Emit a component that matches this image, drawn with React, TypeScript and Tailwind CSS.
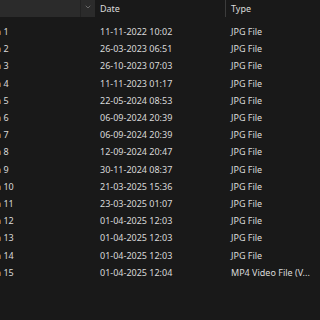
import { FiChevronDown } from 'react-icons/fi';

const files = [
    { n: 1, date: '11-11-2022 10:02', type: 'JPG File' },
    { n: 2, date: '26-03-2023 06:51', type: 'JPG File' },
    { n: 3, date: '26-10-2023 07:03', type: 'JPG File' },
    { n: 4, date: '11-11-2023 01:17', type: 'JPG File' },
    { n: 5, date: '22-05-2024 08:53', type: 'JPG File' },
    { n: 6, date: '06-09-2024 20:39', type: 'JPG File' },
    { n: 7, date: '06-09-2024 20:39', type: 'JPG File' },
    { n: 8, date: '12-09-2024 20:47', type: 'JPG File' },
    { n: 9, date: '30-11-2024 08:37', type: 'JPG File' },
    { n: 10, date: '21-03-2025 15:36', type: 'JPG File' },
    { n: 11, date: '23-03-2025 01:07', type: 'JPG File' },
    { n: 12, date: '01-04-2025 12:03', type: 'JPG File' },
    { n: 13, date: '01-04-2025 12:03', type: 'JPG File' },
    { n: 14, date: '01-04-2025 12:03', type: 'JPG File' },
    { n: 15, date: '01-04-2025 12:04', type: 'MP4 Video File (V...' },
];

const App = () => {
    return (
        <div className="w-[320px] h-[320px] overflow-hidden bg-[#191919] text-[#dadada] text-[9px] leading-none" style={{ fontFamily: '"Noto Sans", "Open Sans", sans-serif' }}>
            {/* column headers */}
            <div className="flex h-[17px]">
                <div className="flex w-[95px] bg-[#2b2b2b]">
                    <div className="w-[81px] border-r border-[#222222]" />
                    <div className="flex flex-1 items-center justify-center pb-[3px] text-[#8a8a8a]">
                        <FiChevronDown className="w-[8px] h-[8px]" />
                    </div>
                </div>
                <div className="flex w-[130px] items-center pl-[5px]">Date</div>
                <div className="flex flex-1 items-center border-l border-[#3c3c3c] pl-[5px]">Type</div>
            </div>

            {/* rows */}
            <div className="pt-[6px]">
                {files.map((f) => (
                    <div key={f.n} className="flex h-[17.2px] items-center">
                        <div className="w-[95px] overflow-hidden whitespace-nowrap">
                            <span className="ml-[-4px]">a {f.n}</span>
                        </div>
                        <div className="w-[130px] pl-[5px] whitespace-nowrap">{f.date}</div>
                        <div className="flex-1 pl-[6px] whitespace-nowrap">{f.type}</div>
                    </div>
                ))}
            </div>
        </div>
    );
};

export default App;
